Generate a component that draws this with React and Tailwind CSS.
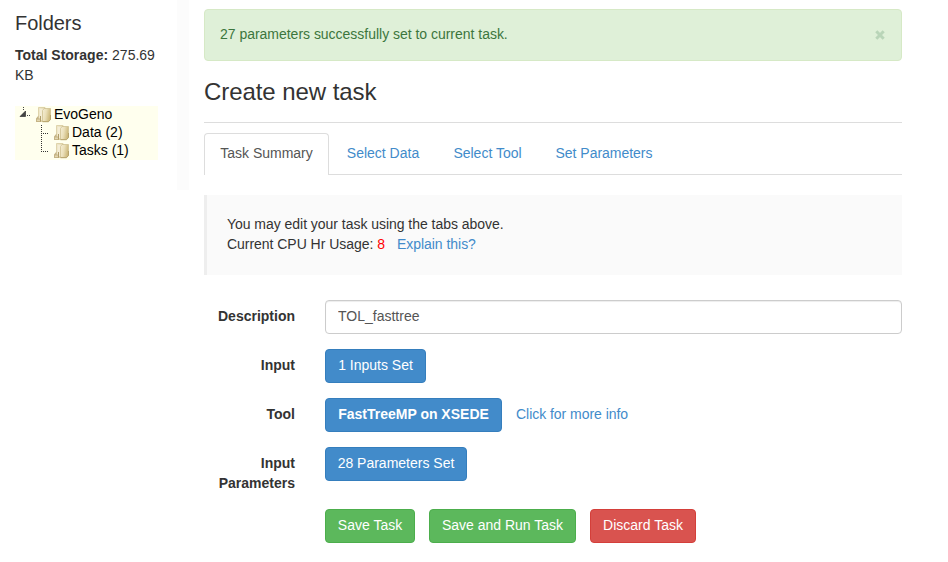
import React from "react";

function FolderIcon() {
  return (
    <svg width="16" height="18" viewBox="0 0 16 18" className="shrink-0">
      <defs>
        <linearGradient id="back" x1="0" y1="0" x2="1" y2="0">
          <stop offset="0" stopColor="#efe6c6" />
          <stop offset="1" stopColor="#d3c28c" />
        </linearGradient>
        <linearGradient id="front" x1="0" y1="0" x2="1" y2="0.3">
          <stop offset="0" stopColor="#f5eed6" />
          <stop offset="0.5" stopColor="#eadfb8" />
          <stop offset="1" stopColor="#cdb97c" />
        </linearGradient>
      </defs>
      <path d="M2.500 1.500H9L10 3.500V15.500H2.500Z" fill="url(#back)" stroke="#d8cba0" strokeWidth="0.8" />
      <path d="M3.500 2.500H8.500L7 5V14H3.500Z" fill="#f4edd5" />
      <path d="M0 12.500L2.500 9.500V12.500H5V16H0Z" fill="#c5b486" />
      <path d="M1 13.500H4V15H1Z" fill="#e3d7b0" />
      <path d="M4.500 10V15.500" stroke="#b09d69" />
      <path d="M6.500 4.500L8 2.500H14.500V13.500L12.500 15.500H6.500Z" fill="url(#front)" stroke="#cfc192" strokeWidth="0.8" />
      <path d="M6.500 15.700H12.500L14.500 13.500V9" fill="none" stroke="#b5a26b" />
    </svg>
  );
}

function RootToggle() {
  return (
    <svg width="18" height="18" viewBox="0 0 18 18" className="shrink-0" shapeRendering="crispEdges">
      <path d="M5.500 1V5" stroke="#444" strokeDasharray="1 1" />
      <path d="M7.500 5V10.500H2Z" fill="#444" stroke="#222" strokeWidth="0.6" shapeRendering="auto" />
      <path d="M9 9.500H12" stroke="#444" strokeDasharray="1 1" />
    </svg>
  );
}

function Branch({ last }) {
  return (
    <svg width="18" height="18" viewBox="0 0 18 18" className="shrink-0" shapeRendering="crispEdges">
      <path d={last ? "M5.500 1V10" : "M5.500 1V18"} stroke="#333" strokeDasharray="1 1" />
      <path d="M5 9.500H12" stroke="#333" strokeDasharray="1 1" />
    </svg>
  );
}

function Sidebar() {
  return (
    <aside className="h-[190px] w-[189px] shrink-0 border-r-[12px] border-[#fcfcfc] pl-[15px]">
      <h2 className="pt-[11px] text-[20px] leading-[24px] tracking-[-0.05px]">Folders</h2>
      <div className="mt-[10px] h-[61px] w-[150px]">
        <div className="flex gap-1">
          <strong>Total Storage:</strong>
          <span>275.69</span>
        </div>
        <div>KB</div>
      </div>
      <ul className="w-[143px] bg-[#ffffee] leading-[18px] text-black">
        <li className="flex h-[18px] pl-[3px]">
          <RootToggle />
          <FolderIcon />
          <span className="-mt-px ml-[2px]">EvoGeno</span>
        </li>
        <li className="flex h-[18px] pl-[21px]">
          <Branch />
          <FolderIcon />
          <span className="-mt-px ml-[2px]">Data (2)</span>
        </li>
        <li className="flex h-[18px] pl-[21px]">
          <Branch last />
          <FolderIcon />
          <span className="-mt-px ml-[2px]">Tasks (1)</span>
        </li>
      </ul>
    </aside>
  );
}

const tones = {
  primary: "border-[#357ebd] bg-[#428bca]",
  success: "border-[#4cae4c] bg-[#5cb85c]",
  danger: "border-[#d43f3a] bg-[#d9534f]",
};

function Button({ tone = "primary", width, children }) {
  return (
    <button
      className={`h-[34px] shrink-0 whitespace-nowrap rounded-[4px] border pb-[2px] text-center text-white ${tones[tone]} ${width}`}
    >
      {children}
    </button>
  );
}

function Row({ label, height = "h-[34px]", children }) {
  return (
    <div className={`flex ${height}`}>
      <div className="mr-[30px] w-[91px] shrink-0 pt-[6px] text-right font-bold">{label}</div>
      {children}
    </div>
  );
}

export default function App() {
  return (
    <div className="flex h-[562px] w-[948px] overflow-hidden bg-white font-['Nimbus_Sans','Liberation_Sans',sans-serif] text-[14px] leading-[20px] text-[#333]">
      <Sidebar />
      <main className="ml-[15px] w-[698px] pt-[9px]">
        <div className="flex h-[52px] items-center justify-between rounded-[4px] border border-[#d6e9c6] bg-[#dff0d8] pl-[15px] pr-[16px] text-[#3c763d]">
          <span className="-mt-[2px] tracking-[-0.02px]">27 parameters successfully set to current task.</span>
          <svg width="10" height="10" viewBox="0 0 10 10" className="-mt-px">
            <path d="M1.300 1.300L8.700 8.700M8.700 1.300L1.300 8.700" stroke="#b9d5b8" strokeWidth="3" />
          </svg>
        </div>
        <h1 className="mt-[18px] text-[24px] leading-[26px] tracking-[-0.07px]">Create new task</h1>
        <hr className="mt-[17px] border-[#ddd]" />
        <nav className="mt-[10px] flex h-[42px] border-b border-[#ddd] text-[#428bca]">
          <a className="h-[42px] w-[125px] rounded-t-[4px] border border-b-0 border-[#ddd] bg-white pt-[9px] text-center text-[#555]">Task Summary</a>
          <a className="ml-[2px] w-[104px] pt-[10px] text-center">Select Data</a>
          <a className="ml-[2px] w-[101px] pt-[10px] text-center">Select Tool</a>
          <a className="ml-[2px] w-[128px] pt-[10px] text-center tracking-[-0.02px]">Set Parameters</a>
        </nav>
        <section className="mt-5 h-20 border-l-[3px] border-[#eee] bg-[#fafafa] pl-5 pt-[19px] tracking-[-0.035px]">
          <p>You may edit your task using the tabs above.</p>
          <p>
            Current CPU Hr Usage: <span className="text-[#f00]">8</span>
            <a className="ml-[12px] text-[#428bca]">Explain this?</a>
          </p>
        </section>
        <form className="mt-[25px] flex flex-col gap-[15px]">
          <Row label="Description">
            <input
              readOnly
              value="TOL_fasttree"
              className="h-[34px] w-[577px] rounded-[4px] border border-[#ccc] bg-white px-3 pb-[2px] text-[#555] shadow-[inset_0_1px_1px_rgba(0,0,0,0.075)] outline-none"
            />
          </Row>
          <Row label="Input">
            <Button width="w-[101px]">1 Inputs Set</Button>
          </Row>
          <Row label="Tool">
            <Button width="w-[177px]"><strong>FastTreeMP on XSEDE</strong></Button>
            <a className="ml-[14px] pt-[6px] tracking-[-0.04px] text-[#428bca]">Click for more info</a>
          </Row>
          <Row label="Input Parameters" height="h-[47px]">
            <Button width="w-[142px]">28 Parameters Set</Button>
          </Row>
          <Row>
            <div className="flex gap-[14px]">
              <Button tone="success" width="w-[90px]">Save Task</Button>
              <Button tone="success" width="w-[147px]">Save and Run Task</Button>
              <Button tone="danger" width="w-[106px]">Discard Task</Button>
            </div>
          </Row>
        </form>
      </main>
    </div>
  );
}
